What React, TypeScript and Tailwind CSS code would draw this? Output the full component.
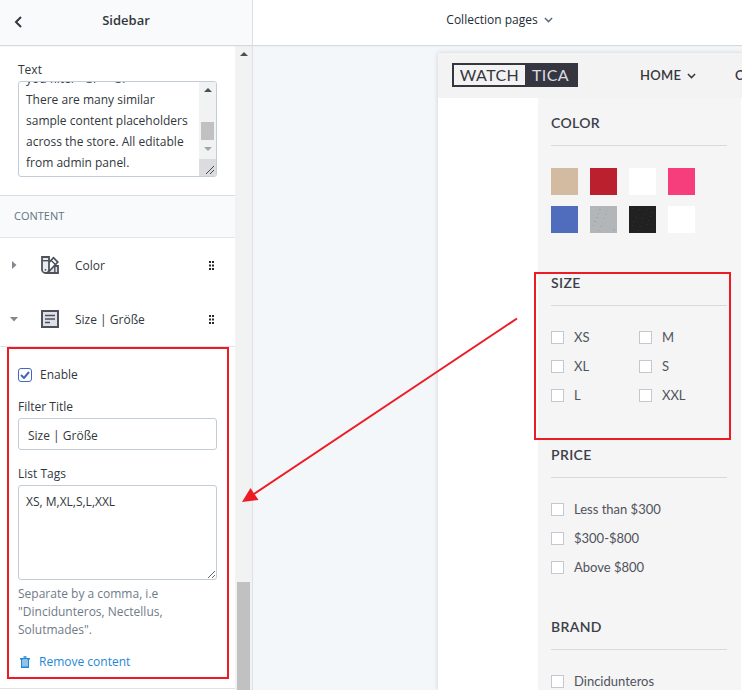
import React, { useEffect, useRef } from "react";

const sans = "font-['Open_Sans','Noto_Sans',sans-serif]";
const shop = "font-['Lato','Noto_Sans',sans-serif]";

function Chevron({ className }: { className: string }) {
  return (
    <svg viewBox="0 0 10 6" className={className} fill="none" stroke="currentColor" strokeWidth="1.6" aria-hidden="true">
      <path d="M1 .8l4 4 4-4" />
    </svg>
  );
}

function SwatchIcon() {
  return (
    <svg viewBox="0 0 18 18" className="size-[18px]" fill="none" stroke="#4d515b" aria-hidden="true">
      <path d="M11 10h6v7H5" fill="#dfe1e8" strokeWidth="1.800" />
      <path d="M13.800 10.500V17" strokeWidth="1.400" />
      <path d="M8 6.500L12.500 1.700l4.300 4.300L7 16.500" fill="#fff" strokeWidth="1.800" />
      <path d="M10 4.200l4.400 4.200" strokeWidth="1.400" />
      <path d="M1 1h7v12.500a3.500 3.500 0 0 1-7 0z" fill="#e9ebef" strokeWidth="1.800" />
      <path d="M1 4.700h7" strokeWidth="1.400" />
      <circle cx="4.500" cy="13.800" r=".9" fill="#4d515b" stroke="none" />
    </svg>
  );
}

function TextIcon() {
  return (
    <svg viewBox="0 0 18 18" className="size-[18px]" fill="#dfe1e8" stroke="#4d515b" strokeWidth="2" aria-hidden="true">
      <path d="M1 1h16v16H1z" />
      <path d="M4 5.500h10M4 9h10M4 12.500h5" strokeWidth="1.400" />
    </svg>
  );
}

function TrashIcon() {
  return (
    <svg viewBox="0 0 10 12" className="h-3 w-[10px]" fill="none" stroke="#1f87d6" aria-hidden="true">
      <path d="M0 2.750h10" strokeWidth="1.500" />
      <path d="M3.500 1h3" strokeWidth="1.500" />
      <path d="M1.750 3v8.250h6.500V3" strokeWidth="1.500" />
      <path d="M4 4v7M6 4v7" strokeWidth="1" />
    </svg>
  );
}

function DragDots() {
  return (
    <svg viewBox="0 0 7 9" className="h-[9px] w-[7px]" fill="#25282d" aria-hidden="true">
      <path d="M1 0h2v2H1zM4 0h2v2H4zM1 3.500h2v2H1zM4 3.500h2v2H4zM1 7h2v2H1zM4 7h2v2H4z" />
    </svg>
  );
}

function ContentRow({ label, open, icon }: { label: string; open?: boolean; icon: React.ReactNode }) {
  return (
    <div className="flex h-[54px] items-center pr-5 pl-[10px]">
      <button className="flex flex-1 items-center text-left" aria-expanded={!!open}>
        <span className="w-[31px]">
          <svg viewBox="0 0 8 8" className="size-2" fill="#838990" aria-hidden="true">
            <path d={open ? "M0 2h8L4 6.500z" : "M2 0v8l4.500-4z"} />
          </svg>
        </span>
        {icon}
        <span className="ml-4 pt-[2px]">{label}</span>
      </button>
      <button aria-label={"Move " + label}>
        <DragDots />
      </button>
    </div>
  );
}

function Sidebar() {
  const intro = useRef<HTMLTextAreaElement>(null);
  useEffect(() => {
    if (intro.current) intro.current.scrollTop = 1000;
  }, []);
  return (
    <aside className={"flex w-[253px] shrink-0 flex-col border-r border-[#dfe3e8] bg-white text-[12px] leading-[18px] text-[#31373d] " + sans}>
      <header className="z-10 flex h-[45px] shrink-0 items-center bg-[#f9fafb] pb-[5px] pl-[14px] shadow-[0_1px_1px_#d5d9dd]">
        <button aria-label="Back">
          <svg viewBox="0 0 8 12" className="mt-1 h-3 w-2" fill="none" stroke="#33373c" strokeWidth="2" aria-hidden="true">
            <path d="M7 1L2 6l5 5" />
          </svg>
        </button>
        <h1 className="flex-1 text-center text-[13px] font-semibold">Sidebar</h1>
        <span className="w-[22px]" />
      </header>
      <div className="flex min-h-0 flex-1">
        <div className="min-w-0 flex-1">
          <section className="border-b border-[#d9dce0] px-[18px] pb-[18px]">
            <div className="h-px bg-[#c4cdd5]" />
            <label htmlFor="intro" className="block pt-[15px] pb-[2px]">Text</label>
            <div className="flex h-[96px] overflow-hidden rounded-[3px] border border-[#c4cdd5]">
              <textarea
                id="intro"
                ref={intro}
                className="min-w-0 flex-1 resize-none overflow-hidden pt-1 pb-[3px] pl-[7px] leading-[21px] whitespace-pre outline-none"
                defaultValue={"you filter <br> <br>\nThere are many similar\nsample content placeholders\nacross the store. All editable\nfrom admin panel."}
              />
              <div className="flex w-[17px] shrink-0 flex-col items-center bg-[#f1f2f2]">
                <svg viewBox="0 0 17 77" className="h-[77px] w-[17px]" aria-hidden="true">
                  <path d="M5 10l4-4 4 4z" fill="#4b4f55" />
                  <path d="M2 40h13v18H2z" fill="#c1c1c1" />
                  <path d="M5 65h8l-4 4z" fill="#a3a5a9" />
                </svg>
                <svg viewBox="0 0 17 17" className="h-[17px] w-[17px] bg-[#dcdcde]" stroke="#44474c" aria-hidden="true">
                  <path d="M7 15l8-8M11 15l4-4" />
                </svg>
              </div>
            </div>
          </section>
          <h2 className="h-[42px] border-b border-[#e3e6e9] bg-[#f9fafb] pt-[11px] pl-[14px] text-[11px] text-[#637381]">CONTENT</h2>
          <ContentRow label="Color" icon={<SwatchIcon />} />
          <ContentRow label="Size | Größe" open icon={<TextIcon />} />
          <div className="border-y border-[#dfe3e8] pr-[6px] pb-[9px] pl-[7px]">
            <form className="flex h-[332px] flex-col border-2 border-[#ed1c24] pt-[17px] pr-[10px] pl-[9px]" onSubmit={(e) => e.preventDefault()}>
              <label className="flex items-center gap-2">
                <span className="grid size-[14px] place-items-center">
                  <input type="checkbox" defaultChecked className="col-start-1 row-start-1 size-[14px] appearance-none rounded-[3px] border border-[#4467bd]" />
                  <svg viewBox="0 0 10 8" className="pointer-events-none col-start-1 row-start-1 h-2 w-[10px]" fill="none" stroke="#4467bd" strokeWidth="2" aria-hidden="true">
                    <path d="M1 4l3 3 5-6" />
                  </svg>
                </span>
                Enable
              </label>
              <label htmlFor="title" className="pt-[14px] pb-[2px]">Filter Title</label>
              <input id="title" defaultValue="Size | Größe" className="h-8 rounded-[3px] border border-[#c4cdd5] pt-[2px] pl-[9px]" />
              <label htmlFor="tags" className="pt-[15px] pb-[2px]">List Tags</label>
              <textarea id="tags" defaultValue="XS, M,XL,S,L,XXL" className="h-[95px] shrink-0 rounded-[3px] border border-[#c4cdd5] px-[7px] py-[7px]" />
              <p className="pt-[5px] text-[#6f7b87]">
                Separate by a comma, i.e "Dincidunteros, Nectellus, Solutmades".
              </p>
              <button type="button" className="mt-[14px] ml-[2px] flex items-center gap-[9px] self-start text-[#1f87d6]">
                <TrashIcon />
                Remove content
              </button>
            </form>
          </div>
        </div>
        <div className="flex w-[17px] shrink-0 flex-col items-center justify-between bg-[#f1f2f2]" aria-hidden="true">
          <svg viewBox="0 0 8 4" className="mt-[7px] h-1 w-2" fill="#4b4f55">
            <path d="M0 4l4-4 4 4z" />
          </svg>
          <div className="h-[108px] w-[13px] bg-[#c1c1c1]" />
        </div>
      </div>
    </aside>
  );
}

const colors = [
  "bg-[#d3bba1]",
  "bg-[#bb202e]",
  "bg-white",
  "bg-[#f73e7c]",
  "bg-[#506dbd]",
  "bg-[#b2b6b9]",
  "bg-[#212121]",
  "bg-white",
];
const colorNames = ["Beige", "Red", "White", "Pink", "Blue", "Grey", "Black", "Ivory"];

function Speckles({ fill }: { fill: string[] }) {
  const dots = [];
  for (let i = 0; i < 30; i++) {
    dots.push(<path key={i} d={`M${3 + ((i * 7) % 22)} ${2 + Math.floor(i / 5) * 4 + (i % 3)}h1v1h-1z`} fill={fill[i % fill.length]} />);
  }
  return <svg viewBox="0 0 27 27" className="size-[27px]" aria-hidden="true">{dots}</svg>;
}

function Group({ title, children }: { title: string; children: React.ReactNode }) {
  return (
    <section className="relative">
      <h2 className="border-b border-[#d9dadc] pb-[11px] text-[14px] leading-[22px] font-semibold tracking-wide text-[#3c3f49]">{title}</h2>
      {children}
    </section>
  );
}

function Options({ items, columns }: { items: string[]; columns?: boolean }) {
  return (
    <div className={(columns ? "grid-cols-2" : "grid-cols-1") + " grid pt-[17px] pb-[34px]"}>
      {items.map((item) => (
        <label key={item} className="flex h-[29px] items-center gap-[10px]">
          <input type="checkbox" className="size-[13px] appearance-none border border-[#c5c8d0] bg-white" />
          {item}
        </label>
      ))}
    </div>
  );
}

function Preview() {
  return (
    <div className={"flex min-w-[304px] flex-1 flex-col bg-white text-[13px] text-[#50535c] shadow-[0_0_5px_#cdd1d6] " + shop}>
      <header className="flex h-[45px] shrink-0 items-center overflow-hidden bg-[#f3f3f3] pb-[2px] pl-[14px] text-[#363640]">
        <a href="#home" className="flex h-6 w-[126px] shrink-0 border-2 border-[#363640] text-[16px] leading-[20px] tracking-wide">
          <span className="w-[71px] text-center">WATCH</span>
          <span className="flex-1 bg-[#363640] text-center text-[#d9dce1]">TICA</span>
        </a>
        <nav className="ml-[62px] flex shrink-0 items-center pt-[2px] text-[13px] font-semibold tracking-wide">
          <button className="flex w-[95px] items-center gap-[6px]">
            HOME
            <Chevron className="h-[6px] w-[9px]" />
          </button>
          <button>C</button>
        </nav>
      </header>
      <div className="flex min-h-0 flex-1">
        <div className="w-[100px] shrink-0" />
        <div className="mr-px flex-1 bg-[#f5f5f5] pt-[14px] pr-[14px] pl-[13px]">
          <Group title="COLOR">
            <div className="grid grid-cols-[repeat(4,27px)] gap-x-3 gap-y-[11px] pt-[22px] pb-[39px]">
              {colors.map((c, i) => (
                <button key={i} aria-label={colorNames[i]} className={"size-[27px] " + c}>
                  {i === 5 && <Speckles fill={["#c9b898", "#9da3a8", "#a5a9ab"]} />}
                  {i === 6 && <Speckles fill={["#2a3038", "#262626"]} />}
                </button>
              ))}
            </div>
          </Group>
          <Group title="SIZE">
            <Options columns items={["XS", "M", "XL", "S", "L", "XXL"]} />
            <div className="pointer-events-none absolute top-0 -right-1 -left-[17px] h-[168px] border-2 border-[#ed1c24]" />
          </Group>
          <Group title="PRICE">
            <Options items={["Less than $300", "$300-$800", "Above $800"]} />
          </Group>
          <Group title="BRAND">
            <Options items={["Dincidunteros"]} />
          </Group>
        </div>
      </div>
    </div>
  );
}

export default function App() {
  return (
    <div className="relative flex h-screen overflow-hidden">
      <Sidebar />
      <main className="flex min-w-0 flex-1 flex-col bg-[#f4f7fa]">
        <header className={"z-10 flex h-[45px] shrink-0 items-center justify-center bg-white pb-[5px] pl-1 text-[12px] text-[#212b36] shadow-[0_1px_1px_#d5d9dd] " + sans}>
          <button className="flex items-center gap-[6px]">
            Collection pages
            <Chevron className="h-[6px] w-[9px] text-[#5f6b77]" />
          </button>
        </header>
        <div className="flex min-h-0 flex-1 pt-2 pl-[185px]">
          <Preview />
        </div>
      </main>
      <svg viewBox="0 0 276 186" className="pointer-events-none absolute top-[317px] left-[242px] z-20 h-[186px] w-[276px]" aria-hidden="true">
        <path d="M275 1.500L12 177" stroke="#ed1c24" strokeWidth="2" />
        <path d="M0 185L8.500 171l8 12z" fill="#ed1c24" />
      </svg>
    </div>
  );
}
